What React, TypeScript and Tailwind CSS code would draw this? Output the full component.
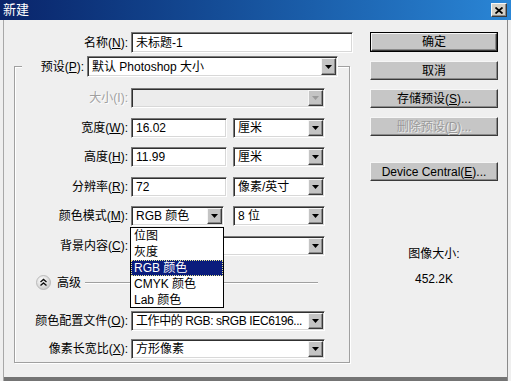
import React from "react";

const font = { fontFamily: '"Liberation Sans", "Noto Sans CJK SC", sans-serif' };

const sunken =
  "border border-t-[#7a7a7a] border-l-[#7a7a7a] border-b-white border-r-white shadow-[inset_1px_1px_0_#303030,inset_-1px_-1px_0_#d8d8d8]";
const raised =
  "border border-t-[#f6f6f6] border-l-[#f6f6f6] border-b-[#3a3a3a] border-r-[#3a3a3a] shadow-[inset_-1px_-1px_0_#8a8a8a]";

function Arrow({ disabled }: { disabled?: boolean }) {
  return (
    <div className={`w-[15px] h-full shrink-0 flex items-center justify-center bg-[#c4c4c4] ${raised}`}>
      <svg width="7" height="4" viewBox="0 0 7 4">
        <polygon points="0,0 7,0 3.5,4" fill={disabled ? "#9a9a9a" : "#000"} />
      </svg>
    </div>
  );
}

function Combo({ w, text, disabled, tight }: { w: string; text?: string; disabled?: boolean; tight?: boolean }) {
  return (
    <div className={`${w} h-[20px] p-[1px] flex items-center ${disabled ? "bg-[#ececec]" : "bg-white"} ${sunken}`}>
      <span className={`flex-1 pl-[3px] whitespace-nowrap overflow-hidden ${tight ? "tracking-[-0.4px]" : ""}`}>{text}</span>
      <Arrow disabled={disabled} />
    </div>
  );
}

function Input({ w, text }: { w: string; text: string }) {
  return (
    <div className={`${w} h-[20px] flex items-center bg-white pl-[4px] ${sunken}`}>{text}</div>
  );
}

function Label({ children, disabled }: { children: React.ReactNode; disabled?: boolean }) {
  return (
    <div
      className={`w-[116px] pr-[3px] text-right whitespace-nowrap ${
        disabled ? "text-[#a0a0a0] [text-shadow:1px_1px_0_#fff]" : ""
      }`}
    >
      {children}
    </div>
  );
}

function Button({ children, main, disabled }: { children: React.ReactNode; main?: boolean; disabled?: boolean }) {
  const face = (
    <div
      className={`h-full w-full flex items-center justify-center bg-[#c6c6c6] ${raised} ${
        disabled ? "text-[#9a9a9a] [text-shadow:1px_1px_0_#eee]" : ""
      }`}
    >
      {children}
    </div>
  );
  return main ? <div className="h-[20px] w-[128px] border border-black">{face}</div> : <div className="h-[19px] w-[128px]">{face}</div>;
}

export default function App() {
  const modes = ["位图", "灰度", "RGB 颜色", "CMYK 颜色", "Lab 颜色"];
  return (
    <div className="w-[511px] h-[381px] overflow-hidden bg-[#efefef] text-[12px] text-black flex flex-col" style={font}>
      <div className="h-[20px] flex items-center justify-between pl-[3px] pr-[4px] bg-gradient-to-r from-[#0a246a] to-[#2a86d6]">
        <span className="text-white text-[13px]">新建</span>
        <div className={`w-[16px] h-[14px] flex items-center justify-center bg-[#d4d0c8] ${raised}`}>
          <svg width="8" height="7" viewBox="0 0 8 7">
            <path d="M0.5 0.5 L7.5 6.5 M7.5 0.5 L0.5 6.5" stroke="#000" strokeWidth="1.8" />
          </svg>
        </div>
      </div>

      <div className="flex-1 flex shadow-[inset_3px_0_0_#efefef,inset_4px_0_0_#a8a8a8,inset_-3px_0_0_#efefef,inset_-4px_0_0_#8a8a8a,inset_0_-4px_0_#747474]">
        <div className="w-[353px] flex flex-col">
          <div className="mt-[12px] h-[21px] flex items-center">
            <div className="w-[131px] pr-[3px] text-right">
              名称(<u>N</u>):
            </div>
            <Input w="w-[222px] h-[21px]" text="未标题-1" />
          </div>

          <div className="mt-[13px] ml-[14px] w-[336px] h-[297px] border border-[#a0a0a0] shadow-[inset_1px_1px_0_#fff,1px_1px_0_#fff] flex flex-col">
            <div className="-mt-[11px] h-[21px] flex items-center relative z-10">
              <div className="w-[7px]" />
              <div className="w-[65px] h-full flex items-center justify-end pr-[3px] bg-[#efefef]">
                预设(<u>P</u>):
              </div>
              <Combo w="w-[251px] h-[21px]" text="默认 Photoshop 大小" />
            </div>

            <div className="mt-[11px] flex flex-col gap-[9.6px]">
              <div className="h-[20px] flex items-center">
                <Label disabled>大小(I):</Label>
                <Combo w="w-[194px]" disabled />
              </div>
              <div className="h-[20px] flex items-center">
                <Label>
                  宽度(<u>W</u>):
                </Label>
                <Input w="w-[96px]" text="16.02" />
                <div className="w-[6px]" />
                <Combo w="w-[92px]" text="厘米" />
              </div>
              <div className="h-[20px] flex items-center">
                <Label>
                  高度(<u>H</u>):
                </Label>
                <Input w="w-[96px]" text="11.99" />
                <div className="w-[6px]" />
                <Combo w="w-[92px]" text="厘米" />
              </div>
              <div className="h-[20px] flex items-center">
                <Label>
                  分辨率(<u>R</u>):
                </Label>
                <Input w="w-[96px]" text="72" />
                <div className="w-[6px]" />
                <Combo w="w-[92px]" text="像素/英寸" />
              </div>
              <div className="h-[20px] flex items-center">
                <Label>
                  颜色模式(<u>M</u>):
                </Label>
                <div className="relative">
                  <Combo w="w-[93px]" text="RGB 颜色" />
                  <div className="absolute z-20 left-[-1px] top-[21px] w-[94px] h-[81px] border border-black bg-white">
                    {modes.map((m, i) => (
                      <div
                        key={m}
                        className={`h-[16px] leading-[16px] pl-[3px] whitespace-nowrap ${
                          i === 2 ? "bg-[#0a1c7c] text-white outline-1 outline-dotted outline-[#e8e890] -outline-offset-1" : ""
                        }`}
                      >
                        {m}
                      </div>
                    ))}
                  </div>
                </div>
                <div className="w-[9px]" />
                <Combo w="w-[92px]" text="8 位" />
              </div>
              <div className="h-[20px] flex items-center">
                <Label>
                  背景内容(<u>C</u>):
                </Label>
                <Combo w="w-[194px]" />
              </div>
            </div>

            <div className="mt-[17px] h-[20px] flex items-center">
              <div className="w-[21px]" />
              <svg width="15" height="15" viewBox="0 0 15 15">
                <defs>
                  <radialGradient id="g" cx="40%" cy="35%" r="70%">
                    <stop offset="0%" stopColor="#ffffff" />
                    <stop offset="100%" stopColor="#c8c8c8" />
                  </radialGradient>
                </defs>
                <circle cx="7.5" cy="7.5" r="7" fill="url(#g)" stroke="#b0b0b0" strokeWidth="0.8" />
                <path d="M4.5 7 L7.5 4.5 L10.5 7 M4.5 10.5 L7.5 8 L10.5 10.5" stroke="#111" strokeWidth="1.4" fill="none" />
              </svg>
              <span className="ml-[6px]">高级</span>
              <div className="ml-[4px] w-[233px] h-0 border-t border-[#a0a0a0] shadow-[0_1px_0_#fff]" />
            </div>

            <div className="mt-[18px] h-[20px] flex items-center">
              <Label>
                颜色配置文件(<u>O</u>):
              </Label>
              <Combo w="w-[194px]" text="工作中的 RGB: sRGB IEC6196..." tight />
            </div>
            <div className="mt-[8px] h-[20px] flex items-center">
              <Label>
                像素长宽比(<u>X</u>):
              </Label>
              <Combo w="w-[194px]" text="方形像素" />
            </div>
          </div>
        </div>

        <div className="ml-[17px] w-[128px] flex flex-col">
          <div className="mt-[12px] flex flex-col gap-[9px]">
            <Button main>确定</Button>
            <Button>取消</Button>
            <Button>
              存储预设(<u>S</u>)...
            </Button>
            <Button disabled>
              删除预设(<u>D</u>)...
            </Button>
          </div>
          <div className="mt-[26px]">
            <Button>
              Device Central(<u>E</u>)...
            </Button>
          </div>
          <div className="mt-[66px] text-center leading-[14px]">图像大小:</div>
          <div className="mt-[11px] text-center leading-[14px]">452.2K</div>
        </div>
      </div>
    </div>
  );
}
